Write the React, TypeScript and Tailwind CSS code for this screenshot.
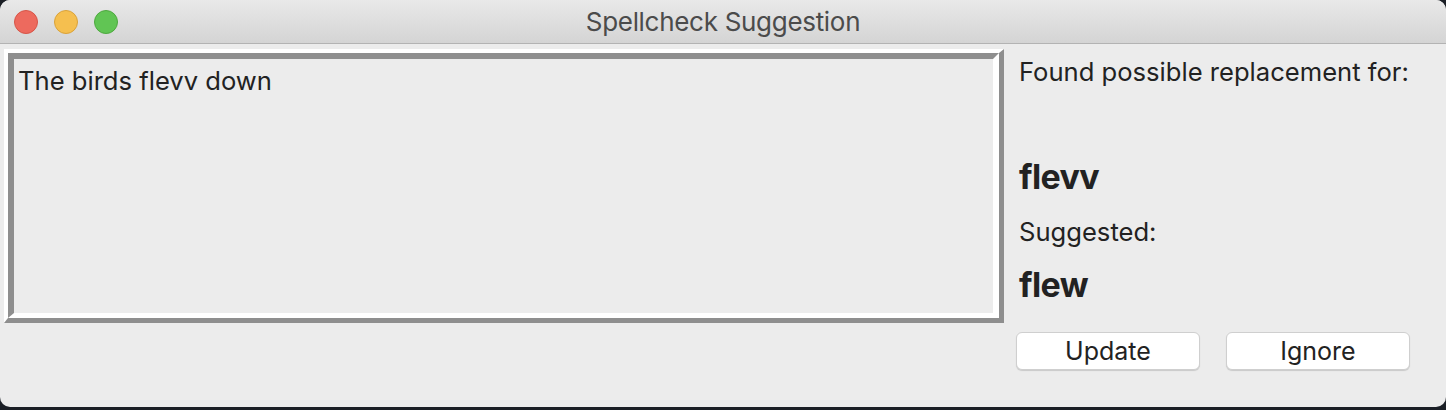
import React from "react";

export default function App() {
  const font = { fontFamily: "Inter, 'Noto Sans', 'Liberation Sans', sans-serif" };
  return (
    <div className="w-[1446px] h-[410px] bg-[#1b1f26]" style={font}>
      <div className="h-[407px] rounded-[10px] bg-[#ececec] overflow-hidden flex flex-col">
        {/* Title bar */}
        <div className="h-[44px] shrink-0 relative flex items-center justify-center bg-gradient-to-b from-[#e9e9e9] to-[#d4d4d4] border-b border-[#b3b3b3]">
          <div className="absolute left-[14px] top-[10px] flex gap-[16px]">
            <div className="w-[24px] h-[24px] rounded-full bg-[#ed6a5e] border border-[#d65548]" />
            <div className="w-[24px] h-[24px] rounded-full bg-[#f5bf4f] border border-[#d9a23a]" />
            <div className="w-[24px] h-[24px] rounded-full bg-[#61c554] border border-[#4ea83f]" />
          </div>
          <span className="text-[26px] leading-none text-[#4b4b4b] tracking-[-0.3px]">Spellcheck Suggestion</span>
        </div>
        {/* Content */}
        <div className="flex flex-1">
          <div className="pl-[4px] pt-[5px]">
            <div className="w-[1000px] h-[274px] border-t-[4px] border-l-[4px] border-b-[5px] border-r-[5px] border-t-white border-l-white border-b-[#8e8e8e] border-r-[#8e8e8e]">
              <div className="w-full h-full border-t-[6px] border-l-[6px] border-b-[5px] border-r-[6px] border-t-[#8e8e8e] border-l-[#8e8e8e] border-b-white border-r-white bg-[#ececec] pl-[4px] pt-[6px]">
                <div className="text-[25.6px] leading-[32px] text-[#222]">The birds flevv down</div>
              </div>
            </div>
          </div>
          <div className="flex flex-col pl-[15px]">
            <div className="mt-[12px] text-[25.6px] leading-[32px] text-[#222]">Found possible replacement for:</div>
            <div className="mt-[67px] text-[34px] leading-[44px] font-bold tracking-[-0.6px] text-[#222]">flevv</div>
            <div className="mt-[17px] text-[25.6px] leading-[32px] text-[#222]">Suggested:</div>
            <div className="mt-[15px] text-[34px] leading-[44px] font-bold tracking-[-0.6px] text-[#222]">flew</div>
            <div className="mt-[25px] -ml-[3px] flex gap-[26px]">
              <button className="w-[184px] h-[38px] rounded-[6px] bg-white border border-[#cfcfcf] shadow-[0_1px_1px_rgba(0,0,0,0.15)] text-[25px] leading-none text-[#222]">Update</button>
              <button className="w-[184px] h-[38px] rounded-[6px] bg-white border border-[#cfcfcf] shadow-[0_1px_1px_rgba(0,0,0,0.15)] text-[25px] leading-none text-[#222]">Ignore</button>
            </div>
          </div>
        </div>
      </div>
    </div>
  );
}
